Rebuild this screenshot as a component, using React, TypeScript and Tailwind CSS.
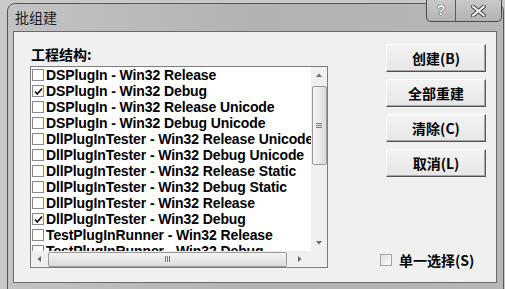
import React from "react";

// Batch build dialog (Win7 basic theme, grayscale screenshot)

const rows: [string, boolean][] = [
  ["DSPlugIn - Win32 Release", false],
  ["DSPlugIn - Win32 Debug", true],
  ["DSPlugIn - Win32 Release Unicode", false],
  ["DSPlugIn - Win32 Debug Unicode", false],
  ["DllPlugInTester - Win32 Release Unicode", false],
  ["DllPlugInTester - Win32 Debug Unicode", false],
  ["DllPlugInTester - Win32 Release Static", false],
  ["DllPlugInTester - Win32 Debug Static", false],
  ["DllPlugInTester - Win32 Release", false],
  ["DllPlugInTester - Win32 Debug", true],
  ["TestPlugInRunner - Win32 Release", false],
  ["TestPlugInRunner - Win32 Debug", false],
];

function Box({ checked }: { checked: boolean }) {
  return (
    <span className="w-[12px] h-[12px] shrink-0 border border-[#8a8a8a] bg-white flex items-center justify-center">
      {checked && (
        <svg width="9" height="9" viewBox="0 0 9 9">
          <path d="M1 4.5 L3.3 7 L8 1.5" fill="none" stroke="#111" strokeWidth="1.8" />
        </svg>
      )}
    </span>
  );
}

function Arrow({ dir }: { dir: "up" | "down" | "left" | "right" }) {
  const d = {
    up: "M1 5 L4 1.5 L7 5 Z",
    down: "M1 2 L4 5.5 L7 2 Z",
    left: "M5 1 L1.5 4 L5 7 Z",
    right: "M2 1 L5.5 4 L2 7 Z",
  }[dir];
  return (
    <svg width="8" height="8" viewBox="0 0 8 8">
      <path d={d} fill="#6a6a6a" />
    </svg>
  );
}

function Btn({ children }: { children: React.ReactNode }) {
  return (
    <div className="w-[100px] h-[28px] flex items-center justify-center border border-t-[#fafafa] border-l-[#fafafa] border-r-[#5c5c5c] border-b-[#4f4f4f] bg-gradient-to-b from-[#f3f3f3] to-[#e6e6e6] shadow-[inset_-1px_-1px_0_#a8a8a8] text-[14px] font-bold text-black">
      {children}
    </div>
  );
}

export default function App() {
  return (
    <div className="w-[505px] h-[289px] overflow-hidden bg-[#c9c9c9] pl-[7px] pt-[3px] font-['Liberation_Sans','Noto_Sans_CJK_SC',sans-serif]">
      <div className="w-[497px] h-[300px] rounded-tl-[8px] rounded-tr-[8px] border border-[#575757] bg-gradient-to-r from-[#c3c3c3] via-[#b2b2b2] to-[#b6b6b6] flex flex-col">
        {/* title bar */}
        <div className="h-[27px] flex items-start justify-between">
          <span className="ml-[7px] mt-[3px] text-[14px] text-[#1b1b1b] font-['Noto_Sans_CJK_SC',sans-serif]">批组建</span>
          <div className="-mt-[4px] mr-[1px] flex h-[22px] border border-t-0 border-[#4c4c4c] rounded-b-[5px] overflow-hidden bg-gradient-to-b from-[#c9c9c9] to-[#b3b3b3]">
            <div className="w-[29px] flex items-center justify-center border-r border-[#5a5a5a] text-[14px] font-bold text-[#f4f4f4] [text-shadow:0_0_1px_#333,0_0_1px_#333]">?</div>
            <div className="w-[45px] flex items-center justify-center">
              <svg width="15" height="12" viewBox="0 0 15 12">
                <path d="M2 1.5 L13 10.5 M13 1.5 L2 10.5" stroke="#444" strokeWidth="4" strokeLinecap="square" />
                <path d="M2 1.5 L13 10.5 M13 1.5 L2 10.5" stroke="#f2f2f2" strokeWidth="2" strokeLinecap="square" />
              </svg>
            </div>
          </div>
        </div>

        {/* client area */}
        <div className="ml-[5px] w-[484px] h-[252px] border border-[#6a6a6a] bg-[#f0f0f0] flex">
          <div className="pl-[16px] pt-[12px] flex flex-col">
            <div className="h-[20px] pl-[1px] text-[14px] leading-[20px] font-bold font-['Noto_Sans_CJK_SC',sans-serif] text-black">工程结构:</div>
            <div className="mt-[2px] w-[298px] h-[202px] border border-[#7d7d7d] bg-white flex flex-col">
              <div className="flex h-[184px]">
                <div className="w-[280px] overflow-hidden">
                  {rows.map(([t, c]) => (
                    <div key={t} className="h-[16px] flex items-center gap-[2px] pl-[1px] whitespace-nowrap text-[14px] font-bold tracking-[-0.1px] text-black">
                      <Box checked={c} />
                      <span>{t}</span>
                    </div>
                  ))}
                </div>
                <div className="w-[16px] bg-[#efefef] flex flex-col items-center">
                  <div className="h-[17px] flex items-center justify-center"><Arrow dir="up" /></div>
                  <div className="mt-[2px] w-[15px] h-[79px] rounded-[2px] border border-[#9a9a9a] bg-gradient-to-r from-[#f4f4f4] to-[#dcdcdc] flex flex-col items-center justify-center gap-[1px]">
                    <span className="w-[6px] h-[1px] bg-[#7a7a7a]" />
                    <span className="w-[6px] h-[1px] bg-[#7a7a7a]" />
                    <span className="w-[6px] h-[1px] bg-[#7a7a7a]" />
                  </div>
                  <div className="mt-auto h-[17px] flex items-center justify-center"><Arrow dir="down" /></div>
                </div>
              </div>
              <div className="flex h-[16px]">
                <div className="w-[280px] bg-[#efefef] flex items-center">
                  <div className="w-[17px] flex items-center justify-center"><Arrow dir="left" /></div>
                  <div className="w-[239px] h-[15px] rounded-[2px] border border-[#9a9a9a] bg-gradient-to-b from-[#f4f4f4] to-[#dcdcdc] flex items-center justify-center gap-[1px]">
                    <span className="w-[1px] h-[6px] bg-[#7a7a7a]" />
                    <span className="w-[1px] h-[6px] bg-[#7a7a7a]" />
                    <span className="w-[1px] h-[6px] bg-[#7a7a7a]" />
                  </div>
                  <div className="ml-auto w-[22px] flex items-center justify-center"><Arrow dir="right" /></div>
                </div>
                <div className="w-[16px] bg-[#efefef]" />
              </div>
            </div>
          </div>

          <div className="ml-[58px] pt-[12px] pb-[14px] flex flex-col font-['Noto_Sans_CJK_SC',sans-serif]">
            <div className="flex flex-col gap-[7px]">
              <Btn>创建(B)</Btn>
              <Btn>全部重建</Btn>
              <Btn>清除(C)</Btn>
              <Btn>取消(L)</Btn>
            </div>
            <div className="mt-auto -ml-[6px] h-[16px] flex items-center gap-[7px]">
              <span className="w-[12px] h-[12px] border border-[#a3a3a3] bg-gradient-to-br from-[#e2e2e2] to-[#fbfbfb]" />
              <span className="text-[14px] font-bold text-black">单一选择(S)</span>
            </div>
          </div>
        </div>
      </div>
    </div>
  );
}
